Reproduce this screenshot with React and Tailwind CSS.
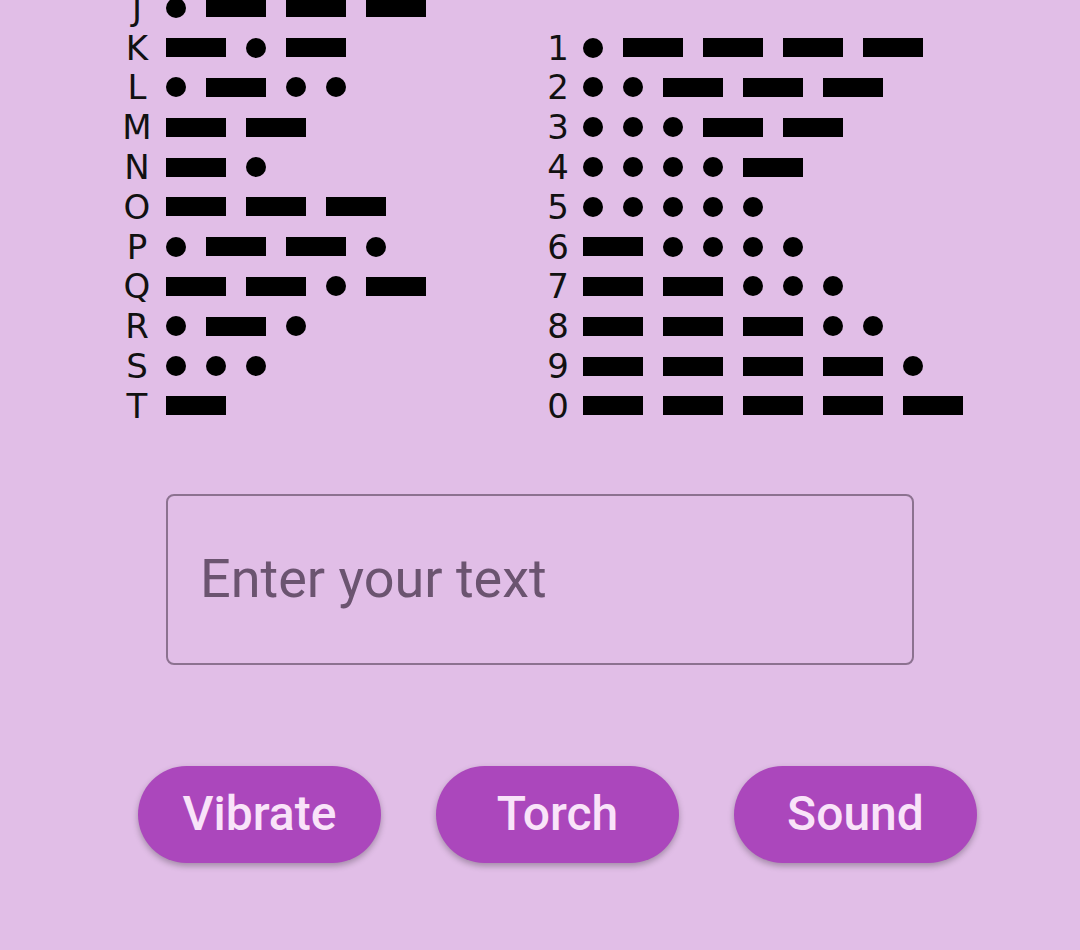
import React from "react";

// morse code rows: [left letter, code, right digit, code]
const rows = [
  ["J", ".---", null, null],
  ["K", "-.-", "1", ".----"],
  ["L", ".-..", "2", "..---"],
  ["M", "--", "3", "...--"],
  ["N", "-.", "4", "....-"],
  ["O", "---", "5", "....."],
  ["P", ".--.", "6", "-...."],
  ["Q", "--.-", "7", "--..."],
  ["R", ".-.", "8", "---.."],
  ["S", "...", "9", "----."],
  ["T", "-", "0", "-----"],
];

function Code({ code }) {
  return (
    <div className="flex items-center gap-[20px]">
      {code.split("").map((c, i) =>
        c === "." ? (
          <span key={i} className="block w-[20px] h-[20px] rounded-full bg-black" />
        ) : (
          <span key={i} className="block w-[60px] h-[19px] bg-black" />
        )
      )}
    </div>
  );
}

function Chart() {
  return (
    <div className="-mt-[12px] flex flex-col" style={{ fontFamily: "'DejaVu Sans', sans-serif" }}>
      {rows.map(([l, lc, r, rc]) => (
        <div key={l} className="flex h-[39.8px] items-center">
          <div className="ml-[118px] w-[421px] flex items-center">
            <span className="w-[38px] text-center text-[34px] leading-none text-[#111]">{l}</span>
            <div className="ml-[10px]">
              <Code code={lc} />
            </div>
          </div>
          {r && (
            <div className="flex items-center">
              <span className="w-[38px] text-center text-[34px] leading-none text-[#111]">{r}</span>
              <div className="ml-[6px]">
                <Code code={rc} />
              </div>
            </div>
          )}
        </div>
      ))}
    </div>
  );
}

export default function App() {
  return (
    <div
      className="h-[950px] w-[1080px] overflow-hidden bg-[#e1bee7]"
      style={{ fontFamily: "Roboto, 'Liberation Sans', sans-serif" }}
    >
      <Chart />

      <div className="ml-[166px] mt-[68px] w-[748px] h-[171px] rounded-[8px] border-2 border-[#8c7290] flex items-center px-[32px] pb-[2px]">
        <input
          type="text"
          placeholder="Enter your text"
          className="w-full bg-transparent outline-none text-[54px] text-[#3b2a3f] placeholder:text-[#6b5470]"
        />
      </div>

      <div className="ml-[138px] mt-[101px] flex gap-[55px]">
        {["Vibrate", "Torch", "Sound"].map((b) => (
          <button
            key={b}
            className="w-[243px] h-[97px] rounded-full bg-[#ab47bc] text-[#f9e3f9] text-[48px] font-medium shadow-[0_3px_6px_rgba(0,0,0,0.28)]"
          >
            {b}
          </button>
        ))}
      </div>
    </div>
  );
}
